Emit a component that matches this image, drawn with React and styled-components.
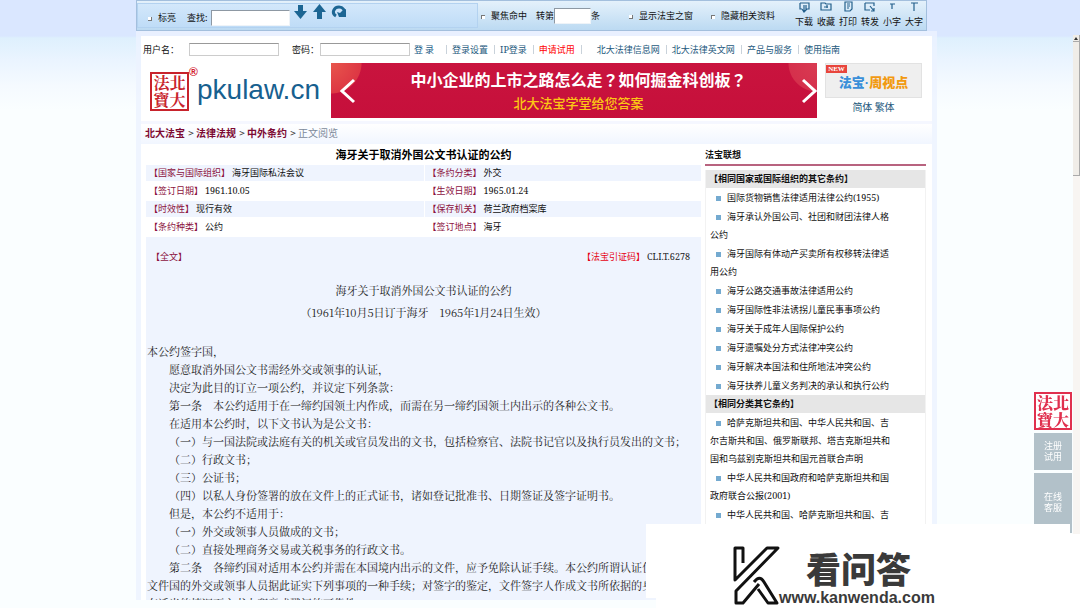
import React from "react";
import styled, { createGlobalStyle } from "styled-components";

const sans = `"Liberation Sans", "Noto Sans CJK SC", sans-serif`;
const cjk = `"Noto Sans CJK SC", sans-serif`;
const cjkWide = `"Noto Sans CJK TC", sans-serif`;
const serif = `"Noto Serif CJK SC", "Noto Sans CJK SC", serif`;
const mixed = `"Noto Serif", "Noto Sans CJK SC", sans-serif`;

const Global = createGlobalStyle`
  * { box-sizing: border-box; }
  body { margin: 0; background: #f7fbff; font: 9px/18px ${cjk}; color: #111; }
  a { color: inherit; text-decoration: none; }
  button, input { font: inherit; }
  ul, h1, h2, p { margin: 0; padding: 0; }
  ul { list-style: none; }
`;

const Shell = styled.div`
  display: flex;
  height: 100vh;
  overflow: hidden;
  background: linear-gradient(#dae7ff 0 36px, #def0fd 38px, #eaf4ff 60px, #f5faff 86px, #fafeff 110px);
`;
const Page = styled.div`
  flex: 1;
  min-width: 0;
  height: calc(100vh - 8px);
  overflow: hidden;
`;
const Toolbar = styled.header`
  display: flex;
  align-items: center;
  width: 100%;
  max-width: 791px;
  height: 31px;
  margin: 0 auto 5px;
  position: relative;
  right: 5px;
  border: 1px solid #a3bfdd;
  background: linear-gradient(#e4f1fb, #bcdaf2);
`;
const FindGroup = styled.form`
  display: flex;
  align-items: center;
  width: 341px;
  height: 25px;
  padding: 4px 0 0 10px;
  border: 1px solid #b3d2f0;
  background: linear-gradient(#d3e8fb, #bfdcf7);
`;
const CheckLabel = styled.label`
  display: flex;
  align-items: center;
  margin-left: ${(p) => p.$left || 0}px;
  white-space: nowrap;
  input {
    appearance: none;
    width: 4px;
    height: 4px;
    margin: 2px 6px 0 0;
    background: #fff;
    border: solid #777;
    border-width: ${(p) => (p.$on ? "0 1px 1px 0" : "1px 0 0 1px")};
  }
`;
const FieldLabel = styled.label`
  margin: 0 ${(p) => p.$right || 0}px 0 ${(p) => p.$left || 0}px;
  white-space: nowrap;
`;
const BarInput = styled.input`
  width: ${(p) => p.$w}px;
  height: 16px;
  padding: 0 2px;
  border: 1px solid #eef3f8;
  border-top-color: #8d98a3;
  border-left-color: #8d98a3;
  background: #fff;
`;
const ArrowButtons = styled.div`
  display: flex;
  gap: 3px;
  margin: 0 0 12px 3px;
`;
const IconButton = styled.button`
  display: block;
  padding: 0;
  border: 0;
  background: none;
  line-height: 0;
`;
const Tools = styled.div`
  display: flex;
  gap: 4px;
  margin-left: auto;
  padding-right: 3px;
`;
const Tool = styled.button`
  display: flex;
  flex-direction: column;
  align-items: center;
  gap: 1px;
  padding: 0;
  border: 0;
  background: none;
  color: #111;
  line-height: 16px;
  white-space: nowrap;
`;

const Sheet = styled.div`
  width: 100%;
  max-width: 791px;
  margin: 0 auto;
  background: #fff;
  box-shadow: 0 0 0 5px rgba(236, 243, 255, 0.8);
`;
const LoginBar = styled.form`
  display: flex;
  align-items: center;
  height: 27px;
  padding-left: 2px;
  white-space: nowrap;
`;
const LoginInput = styled.input`
  width: 90px;
  height: 13px;
  border: 1px solid #ccc;
  border-top-color: #999;
  background: #fff;
`;
const LoginButton = styled.button`
  margin: 0 12px 0 4px;
  padding: 0;
  border: 0;
  background: none;
  color: #165a85;
`;
const NavLinks = styled.nav`
  display: flex;
  margin-left: ${(p) => p.$left || 0}px;
  font-family: ${mixed};
  a {
    padding: 0 6px 0 5px;
    color: #24597d;
    line-height: 9px;
  }
  a.hot { color: #f00; }
  a + a, a.bar { border-left: 1px solid #c9d2da; }
  a.end { border-right: 1px solid #c9d2da; }
`;

const Masthead = styled.div`
  display: flex;
  height: 58px;
  padding: 0 10px 3px 9px;
`;
const Brand = styled.a`
  display: flex;
  width: 181px;
  height: 55px;
  color: #17608f;
  font: 28px/54px ${sans};
  b { color: #d3202c; font: bold 12px/18px ${sans}; width: 8px; }
`;
const Stamp = styled.span`
  display: block;
  width: ${(p) => p.$size}px;
  height: ${(p) => p.$size}px;
  margin-top: ${(p) => p.$top || 0}px;
  border: 2px solid ${(p) => p.$ink};
  background: #fff;
  color: ${(p) => p.$ink};
  text-align: center;
  word-break: break-all;
  font: ${(p) => p.$weight || 700} 16px/17px "Noto Serif CJK TC", "Noto Sans CJK TC", serif;
`;
const Banner = styled.div`
  display: flex;
  align-items: center;
  justify-content: space-between;
  flex: 1;
  min-width: 0;
  height: 55px;
  padding: 0 0 0 9px;
  background:
    radial-gradient(circle at 0 0, #e8564c 0, #dd3744 30px, transparent 31px),
    radial-gradient(circle at 100% 0, #d93b52 0, #d5304c 28px, transparent 29px),
    linear-gradient(#c9143e, #c60f3b);
`;
const BannerText = styled.a`
  color: #fff;
  text-align: center;
  font: bold 16px/24px ${cjkWide};
  white-space: nowrap;
  span { display: block; color: #fbc814; font: 500 13px/24px ${cjk}; }
`;
const Promo = styled.div`
  width: 97px;
  margin-left: 8px;
  text-align: center;
  color: #24597d;
  font-size: 10px;
`;
const PromoCard = styled.a`
  display: block;
  position: relative;
  height: 35px;
  border: 1px solid #e2e2e2;
  background: #efefef;
  color: #3a8fd9;
  font: 900 13px/37px ${sans};
  span { color: #f29a12; }
  em {
    position: absolute;
    top: 1px;
    left: 0;
    width: 21px;
    background: #e8453c;
    color: #fff;
    font: bold 7px/8px "Liberation Serif", serif;
  }
`;

const Crumbs = styled.nav`
  height: 23px;
  padding-left: 4px;
  border-top: 3px solid #f5f7ff;
  background: linear-gradient(#fff, #f1f6ff);
  font-size: 10px;
  line-height: 18px;
  color: #333;
  a { margin-right: 1px; color: #7d0a33; font-weight: bold; }
  span { color: #7c899a; }
`;

const Columns = styled.div`
  display: flex;
  gap: 4px;
  padding: 0 6px 0 5px;
`;
const Main = styled.main`
  flex: 1;
  min-width: 0;
`;
const Title = styled.h1`
  height: 21px;
  text-align: center;
  font: bold 11px/21px ${cjk};
  color: #000;
`;
const Facts = styled.table`
  width: 100%;
  table-layout: fixed;
  border-collapse: separate;
  border-spacing: 0;
  font-family: ${mixed};
  td { height: 18px; padding: 0 0 0 3px; line-height: 16px; border-bottom: 2px solid #fff; }
  td + td { border-left: 1px solid #fff; }
  tr:nth-child(odd) td { background: #eff4fe; }
`;
const Key = styled.span`
  margin-right: 2px;
  color: ${(p) => (p.$hot ? "#e60012" : "#8c1240")};
`;
const Article = styled.article`
  padding: 11px 1px 0;
  background: #eff4fe;
  color: #222;
  font: 11px/18px ${serif};
`;
const ArticleHead = styled.div`
  display: flex;
  justify-content: space-between;
  padding: 0 10px 0 4px;
  font: 9px/18px ${mixed};
`;
const Heading = styled.div`
  padding: 13px 0 19px;
  text-align: center;
  line-height: 22px;
`;
const Para = styled.p`
  text-indent: ${(p) => (p.$flush ? "0" : "2em")};
`;

const Side = styled.aside`
  width: 221px;
`;
const SideTitle = styled.h2`
  height: 22px;
  margin-bottom: 4px;
  border-bottom: 2px solid #b8637f;
  font: bold 9px/22px ${cjk};
`;
const Related = styled.section`
  border: solid #f2f2f2;
  border-width: 0 1px;
  font-family: ${mixed};
  h3 {
    margin: 0;
    padding-left: 3px;
    background: #e6e6e6;
    font: bold 9px/18px ${cjk};
  }
  ul { width: 189px; padding: 1px 0 0 4px; display: grid; gap: 1px; }
  li::before {
    content: "";
    display: inline-block;
    width: 5px;
    height: 5px;
    margin: 0 6px 0 6px;
    background: #74aad0;
  }
`;

const ScrollTrack = styled.div`
  width: 7px;
  padding-top: 35px;
  background: linear-gradient(#dae7ff 0 35px, #f8f5f2 35px);
`;
const Thumb = styled.div`
  height: 141px;
  border: solid #aaa;
  border-width: 0 1px 1px 0;
  background: #f0ede8;
  svg { display: block; border-bottom: 1px solid #aaa; }
`;
const Floats = styled.aside`
  position: fixed;
  top: 392px;
  right: 8px;
  display: flex;
  flex-direction: column;
  gap: 3px;
  width: 38px;
`;
const FloatButton = styled.button`
  height: ${(p) => p.$h}px;
  padding: 0 8px 2px;
  border: 0;
  background: #b2c1c9;
  color: #fff;
  line-height: 11px;
`;
const Watermark = styled.div`
  position: fixed;
  right: 0;
  bottom: 0;
  width: 424px;
  height: 74px;
  padding: 10px 0 0 76px;
  display: flex;
  background: #fff;
  color: #3a3a3a;
  &::before {
    content: "";
    position: absolute;
    z-index: -1;
    right: 10px;
    bottom: 10px;
    width: 424px;
    height: 74px;
    background: #fff;
  }
`;
const MarkText = styled.div`
  margin-left: -1px;
  font: 900 35px/48px ${cjk};
  strong { display: block; padding-left: 27px; height: 45px; font-weight: 900; }
  small { display: block; font: bold 16px/18px ${sans}; }
`;

const ink = "#24608c";
const toolIcons = {
  下载: <path d="M2 2h9v6H8M2 2v6h2M6 4v6M4 8l2 3 3-3M8 4v5" />,
  收藏: <path d="M1 2h4l1 1h5v6H1zM4 6h4M7 4v3" />,
  打印: <path d="M3 1h7v7l-2 2H3zM5 3h3M5 5h3M5 7h2" />,
  转发: <path d="M1 2h9v3M1 2v7h5M6 5l4 5M7 10h3V7" />,
  小字: <path d="M4 3h5M6 3v5" />,
  大字: <path d="M3 2h7M6 2v8" />,
};

const similar = [
  "国际货物销售法律适用法律公约(1955)",
  "海牙承认外国公司、社团和财团法律人格公约",
  "海牙国际有体动产买卖所有权移转法律适用公约",
  "海牙公路交通事故法律适用公约",
  "海牙国际性非法诱拐儿童民事事项公约",
  "海牙关于成年人国际保护公约",
  "海牙遗嘱处分方式法律冲突公约",
  "海牙解决本国法和住所地法冲突公约",
  "海牙扶养儿童义务判决的承认和执行公约",
];
const sameClass = [
  "哈萨克斯坦共和国、中华人民共和国、吉尔吉斯共和国、俄罗斯联邦、塔吉克斯坦共和国和乌兹别克斯坦共和国元首联合声明",
  "中华人民共和国政府和哈萨克斯坦共和国政府联合公报(2001)",
  "中华人民共和国、哈萨克斯坦共和国、吉尔吉斯共和国联合声明",
];
const facts = [
  ["国家与国际组织", "海牙国际私法会议", "条约分类", "外交"],
  ["签订日期", "1961.10.05", "生效日期", "1965.01.24"],
  ["时效性", "现行有效", "保存机关", "荷兰政府档案库"],
  ["条约种类", "公约", "签订地点", "海牙"],
];
const paragraphs = [
  "愿意取消外国公文书需经外交或领事的认证，",
  "决定为此目的订立一项公约，并议定下列条款：",
  "第一条　本公约适用于在一缔约国领土内作成，而需在另一缔约国领土内出示的各种公文书。",
  "在适用本公约时，以下文书认为是公文书：",
  "（一）与一国法院或法庭有关的机关或官员发出的文书，包括检察官、法院书记官以及执行员发出的文书；",
  "（二）行政文书；",
  "（三）公证书；",
  "（四）以私人身份签署的放在文件上的正式证书，诸如登记批准书、日期签证及签字证明书。",
  "但是，本公约不适用于：",
  "（一）外交或领事人员做成的文书；",
  "（二）直接处理商务交易或关税事务的行政文书。",
  "第二条　各缔约国对适用本公约并需在本国境内出示的文件，应予免除认证手续。本公约所谓认证仅指需出示文件国的外交或领事人员据此证实下列事项的一种手续；对签字的鉴定，文件签字人作成文书所依据的身份，以及在适当的情况下文书上印章或戳记的可靠性。",
];

function RelatedList({ title, items }) {
  return (
    <Related>
      <h3>【{title}】</h3>
      <ul>
        {items.map((t) => (
          <li key={t}><a href="#">{t}</a></li>
        ))}
      </ul>
    </Related>
  );
}

export default function App() {
  return (
    <>
      <Global />
      <Shell>
        <Page>
          <Toolbar>
            <FindGroup>
              <CheckLabel $on><input type="checkbox" />标亮</CheckLabel>
              <FieldLabel $left={11} $right={3} htmlFor="find">查找:</FieldLabel>
              <BarInput id="find" $w={79} />
              <ArrowButtons>
                <IconButton type="button" aria-label="下一个">
                  <svg width="16" height="16" fill="#1d6693"><path d="M5 1h5v6h4l-6.500 8L1 7h4z" /></svg>
                </IconButton>
                <IconButton type="button" aria-label="上一个">
                  <svg width="16" height="16" fill="#1d6693"><path d="M5 15h5V8h4L7.500 0 1 8h4z" /></svg>
                </IconButton>
                <IconButton type="button" aria-label="重置">
                  <svg width="16" height="16"><path d="M5 12C0 9 3 3 8 3c4 0 6 3 5 7" fill="none" stroke="#1d6693" strokeWidth="3" /><path d="M6 8l3 1 2-2 4-2v8H8z" fill="#1d6693" /></svg>
                </IconButton>
              </ArrowButtons>
            </FindGroup>
            <CheckLabel $left={3}><input type="checkbox" />聚焦命中</CheckLabel>
            <FieldLabel $left={9} htmlFor="jump">转第</FieldLabel>
            <BarInput id="jump" $w={37} />
            <span>条</span>
            <CheckLabel $left={29} $on><input type="checkbox" />显示法宝之窗</CheckLabel>
            <CheckLabel $left={18}><input type="checkbox" />隐藏相关资料</CheckLabel>
            <Tools>
              {Object.entries(toolIcons).map(([name, icon]) => (
                <Tool key={name} type="button">
                  <svg width="12" height="12" fill="none" stroke={ink} strokeWidth="1.200">{icon}</svg>
                  {name}
                </Tool>
              ))}
            </Tools>
          </Toolbar>

          <Sheet>
            <LoginBar>
              <FieldLabel $right={10} htmlFor="user">用户名：</FieldLabel>
              <LoginInput id="user" />
              <FieldLabel $left={13} $right={1} htmlFor="pass">密码：</FieldLabel>
              <LoginInput id="pass" type="password" />
              <LoginButton type="button">登 录</LoginButton>
              <NavLinks>
                <a className="bar" href="#">登录设置</a>
                <a href="#">IP登录</a>
                <a className="hot end" href="#">申请试用</a>
              </NavLinks>
              <NavLinks $left={10}>
                <a href="#">北大法律信息网</a>
                <a href="#">北大法律英文网</a>
                <a href="#">产品与服务</a>
                <a href="#">使用指南</a>
              </NavLinks>
            </LoginBar>

            <Masthead>
              <Brand href="#">
                <Stamp $size={39} $top={9} $ink="#c8232c">法北寶大</Stamp>
                <b>®</b>
                <span>pkulaw.cn</span>
              </Brand>
              <Banner>
                <IconButton type="button" aria-label="上一张">
                  <svg width="16" height="28" fill="none" stroke="#fff" strokeWidth="3"><path d="M14 3 2 14l12 11" /></svg>
                </IconButton>
                <BannerText href="#">
                  中小企业的上市之路怎么走？如何掘金科创板？
                  <span>北大法宝学堂给您答案</span>
                </BannerText>
                <IconButton type="button" aria-label="下一张">
                  <svg width="16" height="28" fill="none" stroke="#fff" strokeWidth="3"><path d="M2 3l12 11L2 25" /></svg>
                </IconButton>
              </Banner>
              <Promo>
                <PromoCard href="#"><em>NEW</em>法宝·<span>周视点</span></PromoCard>
                <a href="#">简体</a> <a href="#">繁体</a>
              </Promo>
            </Masthead>

            <Crumbs>
              <a href="#">北大法宝</a> &gt; <a href="#">法律法规</a> &gt; <a href="#">中外条约</a> &gt; <span>正文阅览</span>
            </Crumbs>

            <Columns>
              <Main>
                <Title>海牙关于取消外国公文书认证的公约</Title>
                <Facts>
                  <tbody>
                    {facts.map(([k1, v1, k2, v2]) => (
                      <tr key={k1}>
                        <td><Key>【{k1}】</Key>{v1}</td>
                        <td><Key>【{k2}】</Key>{v2}</td>
                      </tr>
                    ))}
                  </tbody>
                </Facts>
                <Article>
                  <ArticleHead>
                    <Key>【全文】</Key>
                    <span><Key $hot>【法宝引证码】</Key>CLI.T.6278</span>
                  </ArticleHead>
                  <Heading>
                    海牙关于取消外国公文书认证的公约
                    <br />
                    （1961年10月5日订于海牙　1965年1月24日生效）
                  </Heading>
                  <Para $flush>本公约签字国，</Para>
                  {paragraphs.map((t) => <Para key={t}>{t}</Para>)}
                </Article>
              </Main>
              <Side>
                <SideTitle>法宝联想</SideTitle>
                <RelatedList title="相同国家或国际组织的其它条约" items={similar} />
                <RelatedList title="相同分类其它条约" items={sameClass} />
              </Side>
            </Columns>
          </Sheet>
        </Page>
        <ScrollTrack>
          <Thumb><svg width="6" height="7"><path d="M1 5l2-3 2 3z" fill="#333" /></svg></Thumb>
        </ScrollTrack>
      </Shell>

      <Floats>
        <Stamp $size={38} $weight={900} $ink="#e0304e">法北寶大</Stamp>
        <FloatButton $h={37}>注册试用</FloatButton>
        <FloatButton $h={60}>在线客服</FloatButton>
      </Floats>

      <Watermark>
        <svg width="48" height="64" viewBox="0 0 48 64" fill="none" stroke="#111" strokeWidth="3" strokeLinejoin="round">
          <path d="M11 19V4H3v32L35 4h11L4 47v12h7l16-19" />
          <path d="M22 38c4-5 7-5 10 0l13 21H36L26 45" />
        </svg>
        <MarkText>
          <strong>看问答</strong>
          <small>www.kanwenda.com</small>
        </MarkText>
      </Watermark>
    </>
  );
}
